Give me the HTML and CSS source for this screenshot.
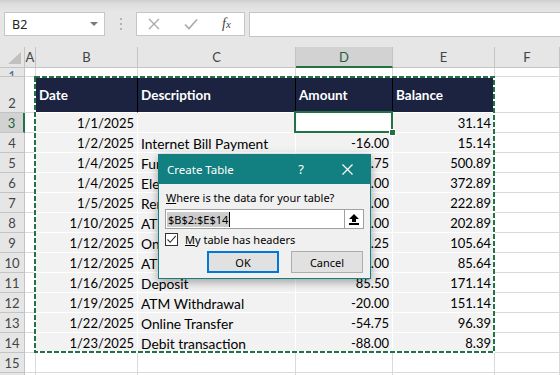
FILE: index.html
```html
<!DOCTYPE html>
<html>
<head>
<meta charset="utf-8">
<title>Create Table</title>
<link rel="stylesheet" href="styles.css">
</head>
<body>
<div class="app">
  <div class="topstrip"></div>
  <div class="fbar">
    <div class="namebox"><span>B2</span><span class="nb-arrow"></span></div>
    <div class="grip"><i></i><i></i><i></i></div>
    <div class="fbtns">
      <svg class="ic-x" width="12" height="12" viewBox="0 0 12 12"><path d="M1 1 L11 11 M11 1 L1 11" stroke="#a8a8a8" stroke-width="1.3" fill="none"/></svg>
      <svg class="ic-ok" width="14" height="12" viewBox="0 0 14 12"><path d="M1 6.5 L5 10.5 L13 1.5" stroke="#a8a8a8" stroke-width="1.6" fill="none"/></svg>
      <span class="fx">f<span class="fx-x">x</span></span>
    </div>
    <div class="finput"></div>
  </div>

  <div class="sheet">
    <!-- header row -->
    <div class="c corner"><span class="tri"></span></div>
    <div class="c ch">A</div>
    <div class="c ch">B</div>
    <div class="c ch">C</div>
    <div class="c ch chsel">D</div>
    <div class="c ch">E</div>
    <div class="c ch">F</div>
    <div class="c ch"></div>
    <!-- row 1 -->
    <div class="c rh rh1">1</div>
    <div class="c"></div><div class="c"></div><div class="c"></div><div class="c"></div><div class="c"></div><div class="c"></div><div class="c"></div>
    <!-- row 2 -->
    <div class="c rh rh2">2</div>
    <div class="c"></div>
    <div class="c h">Date</div>
    <div class="c h">Description</div>
    <div class="c h">Amount</div>
    <div class="c h">Balance</div>
    <div class="c"></div><div class="c"></div>
    <!-- row 3 -->
    <div class="c rh rhsel">3</div><div class="c"></div>
    <div class="c d r">1/1/2025</div><div class="c d"></div><div class="c d active"></div><div class="c d r">31.14</div>
    <div class="c"></div><div class="c"></div>
    <!-- row 4 -->
    <div class="c rh">4</div><div class="c"></div>
    <div class="c d r">1/2/2025</div><div class="c d">Internet Bill Payment</div><div class="c d r">-16.00</div><div class="c d r">15.14</div>
    <div class="c"></div><div class="c"></div>
    <!-- row 5 -->
    <div class="c rh">5</div><div class="c"></div>
    <div class="c d r">1/4/2025</div><div class="c d">Fund Transfer</div><div class="c d r">485.75</div><div class="c d r">500.89</div>
    <div class="c"></div><div class="c"></div>
    <!-- row 6 -->
    <div class="c rh">6</div><div class="c"></div>
    <div class="c d r">1/4/2025</div><div class="c d">Electricity Bill</div><div class="c d r">-128.00</div><div class="c d r">372.89</div>
    <div class="c"></div><div class="c"></div>
    <!-- row 7 -->
    <div class="c rh">7</div><div class="c"></div>
    <div class="c d r">1/5/2025</div><div class="c d">Rent Payment</div><div class="c d r">-150.00</div><div class="c d r">222.89</div>
    <div class="c"></div><div class="c"></div>
    <!-- row 8 -->
    <div class="c rh">8</div><div class="c"></div>
    <div class="c d r">1/10/2025</div><div class="c d">ATM Withdrawal</div><div class="c d r">-20.00</div><div class="c d r">202.89</div>
    <div class="c"></div><div class="c"></div>
    <!-- row 9 -->
    <div class="c rh">9</div><div class="c"></div>
    <div class="c d r">1/12/2025</div><div class="c d">Online Transfer</div><div class="c d r">-97.25</div><div class="c d r">105.64</div>
    <div class="c"></div><div class="c"></div>
    <!-- row 10 -->
    <div class="c rh">10</div><div class="c"></div>
    <div class="c d r">1/12/2025</div><div class="c d">ATM Withdrawal</div><div class="c d r">-20.00</div><div class="c d r">85.64</div>
    <div class="c"></div><div class="c"></div>
    <!-- row 11 -->
    <div class="c rh">11</div><div class="c"></div>
    <div class="c d r">1/16/2025</div><div class="c d">Deposit</div><div class="c d r">85.50</div><div class="c d r">171.14</div>
    <div class="c"></div><div class="c"></div>
    <!-- row 12 -->
    <div class="c rh">12</div><div class="c"></div>
    <div class="c d r">1/19/2025</div><div class="c d">ATM Withdrawal</div><div class="c d r">-20.00</div><div class="c d r">151.14</div>
    <div class="c"></div><div class="c"></div>
    <!-- row 13 -->
    <div class="c rh">13</div><div class="c"></div>
    <div class="c d r">1/22/2025</div><div class="c d">Online Transfer</div><div class="c d r">-54.75</div><div class="c d r">96.39</div>
    <div class="c"></div><div class="c"></div>
    <!-- row 14 -->
    <div class="c rh">14</div><div class="c"></div>
    <div class="c d r">1/23/2025</div><div class="c d">Debit transaction</div><div class="c d r">-88.00</div><div class="c d r">8.39</div>
    <div class="c"></div><div class="c"></div>
    <!-- row 15 -->
    <div class="c rh">15</div>
    <div class="c"></div><div class="c"></div><div class="c"></div><div class="c"></div><div class="c"></div><div class="c"></div><div class="c"></div>
    <!-- row 16 -->
    <div class="c rh">16</div>
    <div class="c"></div><div class="c"></div><div class="c"></div><div class="c"></div><div class="c"></div><div class="c"></div><div class="c"></div>

    <svg class="ants" width="461" height="277" viewBox="0 0 461 277">
      <rect x="1" y="1" width="459" height="275" fill="none" stroke="#ffffff" stroke-width="2"/>
      <rect x="1" y="1" width="459" height="275" fill="none" stroke="#217346" stroke-width="2" stroke-dasharray="5 2"/>
    </svg>
  </div>

  <div class="dialog">
    <div class="dtitle">
      <span class="dt-text">Create Table</span>
      <span class="dt-help">?</span>
      <svg class="dt-close" width="11" height="11" viewBox="0 0 11 11"><path d="M0.5 0.5 L10.5 10.5 M10.5 0.5 L0.5 10.5" stroke="#ffffff" stroke-width="1.2" fill="none"/></svg>
    </div>
    <div class="dbody">
      <div class="prompt">Where is the data for your table?</div>
      <div class="range">
        <div class="range-text"><span class="sel">$B$2:$E$14</span><span class="caret"></span></div>
        <div class="range-btn"><svg width="10" height="11" viewBox="0 0 10 11"><path d="M5 0 L10 5 H7 V8 H3 V5 H0 Z" fill="#000"/><rect x="0" y="9" width="10" height="2" fill="#000"/></svg></div>
      </div>
      <div class="chk">
        <span class="box"><svg width="11" height="11" viewBox="0 0 11 11"><path d="M1.5 5.5 L4.2 8.3 L9.8 1.8" stroke="#333" stroke-width="1.1" fill="none"/></svg></span>
        <span class="chk-label">My table has headers</span>
      </div>
      <div class="btns">
        <div class="btn default">OK</div>
        <div class="btn">Cancel</div>
      </div>
    </div>
  </div>
</div>
</body>
</html>
```
FILE: styles.css
```css
html, body {
  margin: 0;
  padding: 0;
}
body {
  width: 560px;
  height: 375px;
  overflow: hidden;
  background: #e6e6e6;
  font-family: Lato, "Liberation Sans", sans-serif;
}
.app {
  position: relative;
  width: 560px;
  height: 375px;
  overflow: hidden;
  background: #e6e6e6;
}
.topstrip {
  height: 12px;
  background: linear-gradient(#cfcfcf, #dedede 35%, #e6e6e6);
}
.fbar {
  display: flex;
  height: 25px;
}
.namebox {
  margin-left: 4px;
  width: 101px;
  height: 24px;
  box-sizing: border-box;
  border: 1px solid #c6c6c6;
  background: #fff;
  display: flex;
  align-items: center;
  justify-content: space-between;
  padding: 0 6px 0 7px;
  font-family: "Noto Sans", sans-serif;
  font-size: 12.5px;
  color: #222;
}
.nb-arrow {
  width: 0;
  height: 0;
  border-left: 4px solid transparent;
  border-right: 4px solid transparent;
  border-top: 4px solid #7a7a7a;
}
.grip {
  width: 31px;
  display: flex;
  flex-direction: column;
  align-items: center;
  justify-content: center;
  gap: 3px;
  padding-bottom: 2px;
}
.grip i {
  display: block;
  width: 2px;
  height: 2px;
  background: #b3b3b3;
}
.fbtns {
  width: 109px;
  height: 24px;
  box-sizing: border-box;
  border: 1px solid #c6c6c6;
  background: #fff;
  display: flex;
  align-items: center;
  padding-left: 11px;
}
.ic-ok {
  margin-left: 24px;
}
.fx {
  margin-left: 24px;
  font-family: "Liberation Serif", serif;
  font-style: italic;
  font-size: 14px;
  color: #444;
}
.fx-x {
  font-size: 11px;
}
.finput {
  margin-left: 4px;
  flex: 1;
  height: 25px;
  box-sizing: border-box;
  background: #fff;
  border: 1px solid #c6c6c6;
  border-right: none;
}

/* sheet grid */
.sheet {
  position: relative;
  margin-top: 10px;
  display: grid;
  grid-template-columns: 25px 11px 102px 158px 97px 102px 65px 1fr;
  grid-template-rows: 21px 9px 36px repeat(14, 20px);
  background: #fff;
  font-size: 13px;
  color: #000;
}
.c {
  box-sizing: border-box;
  border-right: 1px solid #d9d9d9;
  border-bottom: 1px solid #d9d9d9;
  background: #fff;
  display: flex;
  align-items: center;
  padding: 0 3px;
  white-space: nowrap;
  overflow: hidden;
  min-width: 0;
}
.ch {
  background: #e6e6e6;
  border-right: 1px solid #c4c4c4;
  border-bottom: 1px solid #c4c4c4;
  justify-content: center;
  color: #444;
  padding: 0;
}
.chsel {
  background: #d2d2d2;
  border-bottom: 2px solid #217346;
  color: #1f5f3a;
}
.corner {
  background: #e6e6e6;
  border-right: 1px solid #c4c4c4;
  border-bottom: 1px solid #c4c4c4;
  position: relative;
  padding: 0;
}
.tri {
  position: absolute;
  right: 3px;
  bottom: 3px;
  width: 0;
  height: 0;
  border-left: 13px solid transparent;
  border-bottom: 12px solid #c0c0c0;
}
.rh {
  background: #e6e6e6;
  border-right: 1px solid #c4c4c4;
  border-bottom: 1px solid #c4c4c4;
  justify-content: center;
  color: #444;
  padding: 0;
}
.rh1 {
  align-items: flex-start;
  line-height: 16px;
  padding-top: 0;
  color: #3a6ea5;
}
.rh2 {
  align-items: flex-end;
  padding-bottom: 1px;
}
.rhsel {
  background: #d2d2d2;
  border-right: 2px solid #217346;
  color: #1f5f3a;
}
.h {
  background: #1b2340;
  color: #fff;
  font-weight: 700;
  font-size: 13.5px;
  border-right: 1px solid #000;
  border-bottom: 1px solid #fff;
  padding-left: 3px;
  padding-top: 1px;
}
.d {
  background: #f2f2f2;
  border-right: 1px solid #fff;
  border-bottom: 1px solid #fff;
  padding-top: 1px;
  font-size: 13.8px;
}
.r {
  justify-content: flex-end;
  padding-right: 3px;
  font-size: 13px;
}
.active {
  background: #fff;
  position: relative;
  overflow: visible;
}
.active::after {
  content: "";
  position: absolute;
  left: -2px;
  top: -2px;
  right: -1px;
  bottom: -1px;
  border: 2px solid #217346;
}
.active::before {
  content: "";
  position: absolute;
  right: -4px;
  bottom: -4px;
  width: 5px;
  height: 5px;
  background: #217346;
  border: 1px solid #fff;
  z-index: 2;
}
.ants {
  position: absolute;
  left: 34px;
  top: 29px;
}

/* dialog */
.dialog {
  position: absolute;
  left: 158px;
  top: 154px;
  width: 213px;
  height: 125px;
  box-sizing: border-box;
  border: 1px solid #128080;
  background: #f0f0f0;
  box-shadow: 0 3px 9px rgba(0, 0, 0, 0.35);
  font-family: "Noto Sans", sans-serif;
  font-size: 11px;
  color: #000;
  display: flex;
  flex-direction: column;
}
.dtitle {
  height: 30px;
  margin-top: -1px;
  background: #128080;
  color: #fff;
  display: flex;
  align-items: center;
  padding-left: 8px;
  font-size: 11.5px;
}
.dt-text {
  flex: 1;
}
.dt-help {
  width: 10px;
  text-align: center;
  font-size: 13px;
  margin-right: 36px;
}
.dt-close {
  margin-right: 17px;
}
.dbody {
  padding: 5px 6px 0 6px;
  display: flex;
  flex-direction: column;
}
.prompt {
  height: 18px;
  line-height: 18px;
  padding-left: 1px;
}
.prompt::first-letter,
.chk-label::first-letter {
  text-decoration: underline;
}
.range {
  margin-top: 2px;
  height: 20px;
  box-sizing: border-box;
  border: 1px solid #a0a0a0;
  background: #fff;
  display: flex;
  width: 199px;
}
.range-text {
  flex: 1;
  display: flex;
  align-items: center;
  padding-left: 1px;
}
.sel {
  background: #cccccc;
  line-height: 15px;
  padding: 0 1px;
}
.caret {
  width: 1px;
  height: 15px;
  background: #000;
}
.range-btn {
  width: 18px;
  border-left: 1px solid #a0a0a0;
  display: flex;
  align-items: center;
  justify-content: center;
}
.chk {
  margin-top: 4px;
  height: 13px;
  display: flex;
  align-items: center;
}
.box {
  width: 13px;
  height: 13px;
  box-sizing: border-box;
  border: 1px solid #333;
  background: #fff;
  display: flex;
  align-items: center;
  justify-content: center;
}
.chk-label {
  display: block;
  margin-left: 7px;
}
.btns {
  margin-top: 5px;
  display: flex;
  padding-left: 42px;
  gap: 12px;
}
.btn {
  width: 72px;
  height: 22px;
  box-sizing: border-box;
  border: 1px solid #adadad;
  background: #e1e1e1;
  display: flex;
  align-items: center;
  justify-content: center;
}
.btn.default {
  border: 2px solid #0078d7;
}
```
